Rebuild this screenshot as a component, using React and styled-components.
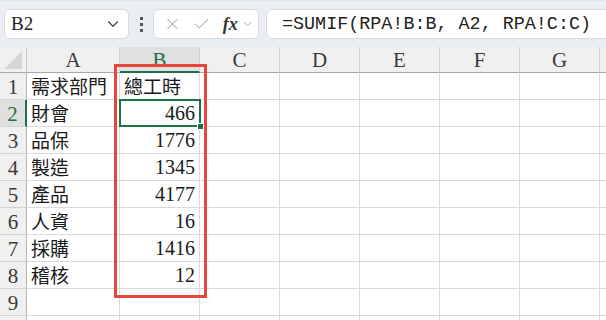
import React from 'react';
import styled, { createGlobalStyle } from 'styled-components';
import { ChevronDown, X, Check } from 'lucide-react';

const GlobalStyle = createGlobalStyle`
  html, body {
    margin: 0;
    padding: 0;
    background: #ffffff;
    overflow: hidden;
  }
`;

const GREEN = '#1e7145';
const GRID = '#dadada';

const Page = styled.div`
  width: 606px;
  height: 320px;
  overflow: hidden;
  background: #ffffff;
`;

const Toolbar = styled.div`
  display: flex;
  align-items: center;
  height: 47px;
  padding-left: 4px;
  box-sizing: border-box;
  background: #eaeef2;
  border-top: 1px solid #e2e5ea;
  overflow: hidden;
`;

const Box = styled.div`
  display: flex;
  align-items: center;
  height: 30px;
  box-sizing: border-box;
  background: #ffffff;
  border: 1px solid #d6d9de;
  border-radius: 6px;
`;

const NameBox = styled(Box)`
  width: 125px;
  padding: 0 6px 0 6px;
  justify-content: space-between;
  font-family: "Liberation Serif", serif;
  font-size: 19px;
  color: #222;
`;

const Dots = styled.div`
  display: flex;
  flex-direction: column;
  gap: 3px;
  margin: 0 10px 0 11px;
  span {
    width: 3px;
    height: 3px;
    background: #555;
  }
`;

const FuncBox = styled(Box)`
  width: 106px;
  padding: 0 4px 0 9px;
  gap: 10px;
  color: #b4b4b4;
`;

const Fx = styled.span`
  font-family: "Liberation Serif", serif;
  font-style: italic;
  font-weight: bold;
  font-size: 18px;
  color: #333;
  margin-left: 2px;
`;

const FormulaBox = styled(Box)`
  flex: 1;
  margin-left: 7px;
  margin-right: -10px;
  padding-left: 15px;
  font-family: "Liberation Mono", monospace;
  font-size: 18.4px;
  color: #222;
  white-space: nowrap;
`;

const Sheet = styled.div`
  position: relative;
  display: grid;
  grid-template-columns: 27px 93px repeat(6, 80px) 1fr;
  grid-template-rows: 26px repeat(10, 27px);
`;

const Corner = styled.div`
  background: #f0f0f0;
  border-right: 1px solid #c8c8c8;
  border-bottom: 1px solid #a8a8a8;
  position: relative;
  &::after {
    content: '';
    position: absolute;
    right: 4px;
    bottom: 3px;
    border-left: 18px solid transparent;
    border-bottom: 18px solid #d6d6d6;
  }
`;

const ColHead = styled.div`
  display: flex;
  align-items: center;
  justify-content: center;
  box-sizing: border-box;
  background: ${p => (p.$active ? '#e0e0e0' : '#f0f0f0')};
  color: ${p => (p.$active ? GREEN : '#3a3a3a')};
  border-right: 1px solid #d2d2d2;
  border-bottom: ${p => (p.$active ? `2px solid ${GREEN}` : '1px solid #a8a8a8')};
  font-family: "Liberation Serif", serif;
  font-size: 21px;
  padding-top: 2px;
`;

const RowHead = styled.div`
  display: flex;
  align-items: center;
  justify-content: center;
  box-sizing: border-box;
  background: ${p => (p.$active ? '#e0e0e0' : '#f0f0f0')};
  color: ${p => (p.$active ? GREEN : '#3a3a3a')};
  border-bottom: 1px solid #d2d2d2;
  border-right: ${p => (p.$active ? `2px solid ${GREEN}` : '1px solid #b4b4b4')};
  font-family: "Liberation Serif", serif;
  font-size: 21px;
  padding-top: 3px;
`;

const Cell = styled.div`
  display: flex;
  align-items: flex-end;
  justify-content: ${p => (p.$num ? 'flex-end' : 'flex-start')};
  box-sizing: border-box;
  padding: 0 4px 2px 4px;
  border-right: 1px solid ${GRID};
  border-bottom: 1px solid ${GRID};
  font-family: ${p => (p.$num ? '"Liberation Serif", serif' : '"Noto Sans CJK TC", sans-serif')};
  font-size: ${p => (p.$num ? '20px' : '19px')};
  line-height: 22px;
  color: #1a1a1a;
  white-space: nowrap;
`;

const Selection = styled.div`
  position: absolute;
  left: 119px;
  top: 52px;
  width: 82px;
  height: 28px;
  box-sizing: border-box;
  border: 2px solid ${GREEN};
  pointer-events: none;
  &::after {
    content: '';
    position: absolute;
    right: -5px;
    bottom: -5px;
    width: 5px;
    height: 5px;
    background: ${GREEN};
    border: 1px solid #ffffff;
  }
`;

const Highlight = styled.div`
  position: absolute;
  left: 114px;
  top: 17px;
  width: 93px;
  height: 234px;
  box-sizing: border-box;
  border: 3px solid #e8453c;
  pointer-events: none;
`;

const columns = ['A', 'B', 'C', 'D', 'E', 'F', 'G', ''];

const rows = [
  ['需求部門', '總工時'],
  ['財會', 466],
  ['品保', 1776],
  ['製造', 1345],
  ['產品', 4177],
  ['人資', 16],
  ['採購', 1416],
  ['稽核', 12],
  ['', ''],
  ['', ''],
];

export default function App() {
  return (
    <Page>
      <GlobalStyle />
      <Toolbar>
        <NameBox>
          <span>B2</span>
          <ChevronDown size={18} strokeWidth={1.6} color="#444" />
        </NameBox>
        <Dots>
          <span />
          <span />
          <span />
        </Dots>
        <FuncBox>
          <X size={20} strokeWidth={1.3} />
          <Check size={20} strokeWidth={1.3} />
          <Fx>fx</Fx>
          <ChevronDown size={14} strokeWidth={1.5} color="#999" style={{ marginLeft: -7 }} />
        </FuncBox>
        <FormulaBox>=SUMIF(RPA!B:B, A2, RPA!C:C)</FormulaBox>
      </Toolbar>
      <Sheet>
        <Corner />
        {columns.map((c, i) => (
          <ColHead key={i} $active={c === 'B'}>{c}</ColHead>
        ))}
        {rows.map((r, ri) => (
          <React.Fragment key={ri}>
            <RowHead $active={ri === 1}>{ri < 9 ? ri + 1 : ''}</RowHead>
            <Cell>{r[0]}</Cell>
            <Cell $num={typeof r[1] === 'number'}>{r[1]}</Cell>
            {columns.slice(2).map((c, ci) => (
              <Cell key={ci} />
            ))}
          </React.Fragment>
        ))}
        <Selection />
        <Highlight />
      </Sheet>
    </Page>
  );
}
